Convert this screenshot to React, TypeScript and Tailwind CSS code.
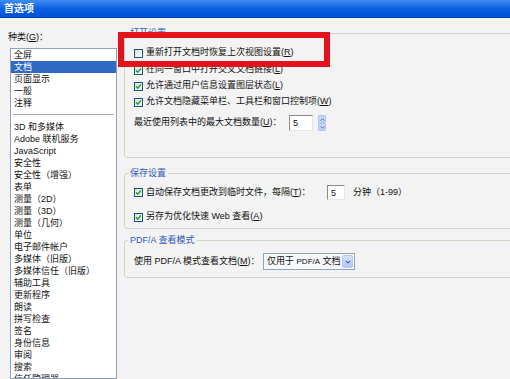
import React from 'react';

const categories: { label: string; selected?: boolean; separator?: boolean }[] = [
  { label: '全屏' },
  { label: '文档', selected: true },
  { label: '页面显示' },
  { label: '一般' },
  { label: '注释' },
  { label: '', separator: true },
  { label: '3D 和多媒体' },
  { label: 'Adobe 联机服务' },
  { label: 'JavaScript' },
  { label: '安全性' },
  { label: '安全性（增强）' },
  { label: '表单' },
  { label: '测量（2D）' },
  { label: '测量（3D）' },
  { label: '测量（几何）' },
  { label: '单位' },
  { label: '电子邮件帐户' },
  { label: '多媒体（旧版）' },
  { label: '多媒体信任（旧版）' },
  { label: '辅助工具' },
  { label: '更新程序' },
  { label: '朗读' },
  { label: '拼写检查' },
  { label: '签名' },
  { label: '身份信息' },
  { label: '审阅' },
  { label: '搜索' },
  { label: '信任管理器' },
];

// access key, e.g. (R)
const Key = ({ c }: { c: string }) => (
  <>
    (<span className="underline">{c}</span>)
  </>
);

const Check = ({ checked }: { checked?: boolean }) => (
  <span className="w-[9px] h-[9px] shrink-0 border border-[#1c5180] bg-linear-to-br from-[#dcdcd7] to-white flex items-center justify-center">
    {checked && (
      <svg viewBox="0 0 7 7" className="w-[7px] h-[7px]">
        <path d="M1 3.4 L2.8 5.2 L6 1.6" stroke="#21a121" strokeWidth="1.5" fill="none" />
      </svg>
    )}
  </span>
);

const Group = ({ title, className, children }: { title: React.ReactNode; className?: string; children: React.ReactNode }) => (
  <div className={`border border-[#d3d3c8] rounded-[3px] ${className ?? ''}`}>
    <div className="-mt-[6px] ml-[3px] px-[2px] w-fit h-[10px] leading-[10px] text-[9px] text-[#2f5cb8] bg-[#f3f3f3]">
      {title}
    </div>
    {children}
  </div>
);

const SunkenInput = ({ value, className }: { value: string; className?: string }) => (
  <div className={`bg-white border-t border-l border-[#8a8a8a] border-r-[#e6e6e6] border-b-[#e6e6e6] border-r border-b pl-[3px] leading-[14px] text-[9px] ${className ?? ''}`}>
    {value}
  </div>
);

const Spinner = () => (
  <div className="flex flex-col w-[8px] h-[16px] ml-[5px]">
    <div className="flex-1 bg-[#c6d5fb] border border-[#b0c4f2] rounded-t-[1px] flex items-center justify-center">
      <svg viewBox="0 0 6 4" className="w-[5px] h-[3px]">
        <path d="M0.5 3.5 L3 1 L5.5 3.5" stroke="#4d6185" strokeWidth="1.2" fill="none" />
      </svg>
    </div>
    <div className="flex-1 bg-[#c6d5fb] border border-[#b0c4f2] rounded-b-[1px] flex items-center justify-center">
      <svg viewBox="0 0 6 4" className="w-[5px] h-[3px]">
        <path d="M0.5 0.5 L3 3 L5.5 0.5" stroke="#4d6185" strokeWidth="1.2" fill="none" />
      </svg>
    </div>
  </div>
);

export default function App() {
  return (
    <div className="relative w-[510px] h-[379px] overflow-hidden bg-[#f3f3f3] flex flex-col text-[#111] font-['Liberation_Sans','Noto_Sans_CJK_SC',sans-serif]">
      {/* Title bar */}
      <div className="h-[18px] shrink-0 bg-linear-to-b from-[#3d8cf5] via-[#0b5fe2] to-[#0052d4] border-b border-[#0040b0] flex items-center pl-[4px] text-white font-bold text-[10px]">
        首选项
      </div>

      <div className="flex flex-1 min-h-0">
        {/* Categories */}
        <div className="w-[117px] shrink-0 pl-[10px] pt-[14px] flex flex-col">
          <div className="-ml-[2px] h-[10px] leading-[10px] text-[9px]">
            种类<Key c="G" />：
          </div>
          <div className="mt-[6px] flex-1 border border-[#8ea3bd] bg-white overflow-hidden">
            {categories.map((c, i) =>
              c.separator ? (
                <div key={i} className="h-[12px] flex items-center px-[2px]">
                  <div className="w-full border-t border-[#a8a8a8] border-b border-b-white" />
                </div>
              ) : (
                <div
                  key={i}
                  className={`h-[12px] leading-[12px] pl-[3px] text-[9px] whitespace-nowrap ${
                    c.selected ? 'bg-[#316ac5] text-white' : ''
                  }`}
                >
                  {c.label}
                </div>
              )
            )}
          </div>
        </div>

        {/* Settings */}
        <div className="ml-[7px] w-[400px] shrink-0 pt-[15px] text-[9px]">
          <Group title="打开设置" className="pb-[26px]">
            <div className="mt-[7px] h-[16px] flex items-center gap-[3px] pl-[9px]">
              <Check />
              <span>重新打开文档时恢复上次视图设置<Key c="R" /></span>
            </div>
            <div className="mt-[1px] h-[16px] flex items-center gap-[3px] pl-[9px]">
              <Check checked />
              <span>在同一窗口中打开交叉文档链接<Key c="L" /></span>
            </div>
            <div className="h-[16px] flex items-center gap-[3px] pl-[9px]">
              <Check checked />
              <span>允许通过用户信息设置图层状态<Key c="L" /></span>
            </div>
            <div className="h-[16px] flex items-center gap-[3px] pl-[9px]">
              <Check checked />
              <span>允许文档隐藏菜单栏、工具栏和窗口控制项<Key c="W" /></span>
            </div>
            <div className="mt-[5px] h-[16px] flex items-center pl-[9px]">
              <span className="w-[155px] shrink-0">最近使用列表中的最大文档数量<Key c="U" />：</span>
              <SunkenInput value="5" className="w-[24px] h-[16px]" />
              <Spinner />
            </div>
          </Group>

          <Group title="保存设置" className="mt-[15px] pb-[3px]">
            <div className="mt-[7px] h-[15px] flex items-center pl-[9px]">
              <Check checked />
              <span className="ml-[3px] w-[178px] shrink-0 whitespace-nowrap">自动保存文档更改到临时文件，每隔<Key c="T" />：</span>
              <SunkenInput value="5" className="ml-[3px] w-[18px] h-[15px]" />
              <span className="ml-[8px]">分钟（1-99）</span>
            </div>
            <div className="mt-[9px] h-[16px] flex items-center gap-[3px] pl-[9px]">
              <Check checked />
              <span>另存为优化快速 Web 查看<Key c="A" /></span>
            </div>
          </Group>

          <Group title="PDF/A 查看模式" className="mt-[11px] pb-[7px]">
            <div className="mt-[8px] h-[17px] flex items-center pl-[9px]">
              <span className="w-[129px] shrink-0 whitespace-nowrap">使用 PDF/A 模式查看文档<Key c="M" />：</span>
              <div className="w-[92px] h-[17px] border border-[#8ea3bd] bg-[#f7f9fd] flex items-center pl-[3px] pr-[1px]">
                <span className="flex-1 whitespace-nowrap">仅用于 <span className="text-[8px]">PDF/A</span> 文档</span>
                <div className="w-[11px] h-[13px] rounded-[2px] border border-[#b4c8f4] bg-linear-to-b from-[#d6e2fd] to-[#b2c7f6] flex items-center justify-center">
                  <svg viewBox="0 0 7 5" className="w-[6px] h-[4px]">
                    <path d="M0.8 1 L3.5 3.8 L6.2 1" stroke="#4d6185" strokeWidth="1.4" fill="none" />
                  </svg>
                </div>
              </div>
            </div>
          </Group>
        </div>
      </div>

      {/* red highlight marker */}
      <div className="absolute left-[118px] top-[32px] w-[212px] h-[35px] border-[6px] border-[#e3131b]" />
    </div>
  );
}
